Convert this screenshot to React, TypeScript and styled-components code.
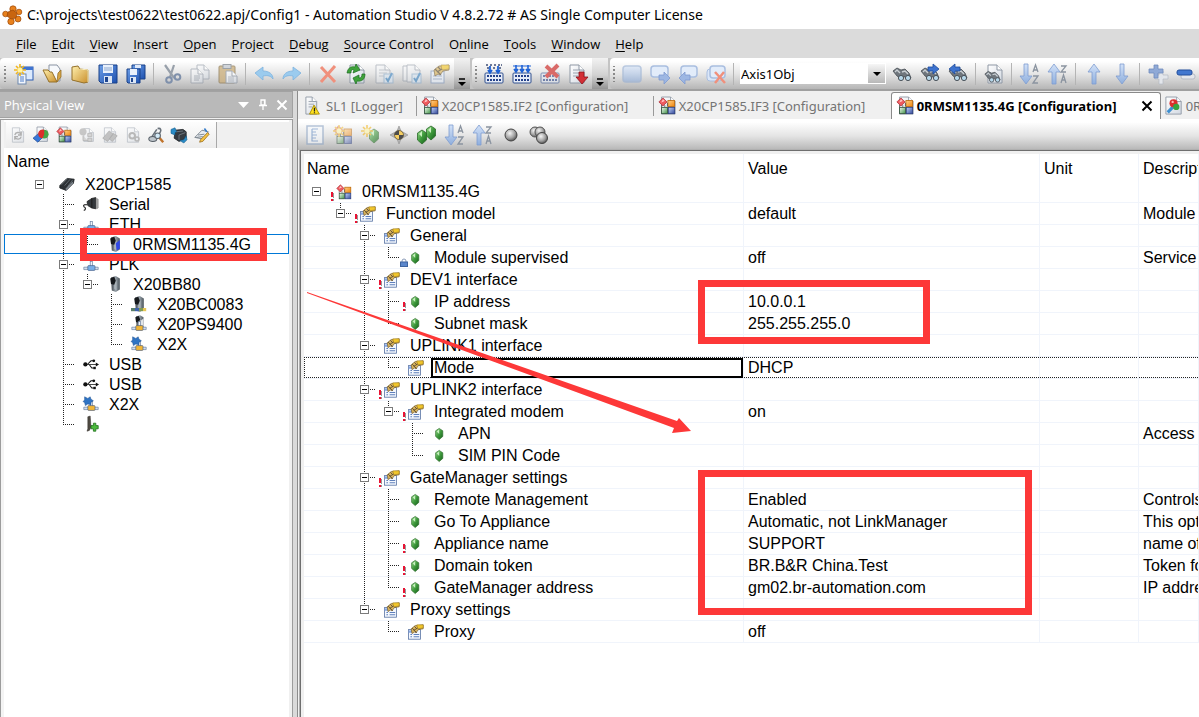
import React from 'react';
import styled, { createGlobalStyle, css } from 'styled-components';

const ui = '"Open Sans", "Noto Sans", sans-serif';
const wide = '"Noto Sans", "Open Sans", sans-serif';
const grid = '"Liberation Sans", Arial, sans-serif';
const red = '#fd3838';

const GlobalStyle = createGlobalStyle`
  * { box-sizing: border-box; }
  body { margin: 0; background: #f0f0f0; color: #000; font-family: ${ui}; }
  button { margin: 0; padding: 0; border: 0; background: none; font: inherit; color: inherit; }
  ul { margin: 0; padding: 0; list-style: none; }
`;

/* ---------- icons ---------- */

const Defs = () => (
  <svg width="0" height="0" style={{ display: 'block' }} aria-hidden="true">
    <defs>
      <linearGradient id="gold" x1="0" y1="0" x2="1" y2="1"><stop offset="0" stopColor="#fff0ae" /><stop offset="1" stopColor="#c98f2c" /></linearGradient>
      <linearGradient id="blue" x1="0" y1="0" x2="1" y2="1"><stop offset="0" stopColor="#6ea0e8" /><stop offset="1" stopColor="#1c4fae" /></linearGradient>
      <linearGradient id="pale" x1="0" y1="0" x2="0" y2="1"><stop offset="0" stopColor="#d3e2f8" /><stop offset="1" stopColor="#8eaedd" /></linearGradient>
      <linearGradient id="steel" x1="0" y1="0" x2="1" y2="0"><stop offset="0" stopColor="#3a4046" /><stop offset="0.5" stopColor="#98a2aa" /><stop offset="1" stopColor="#4d565d" /></linearGradient>
      <linearGradient id="gem" x1="0" y1="0" x2="1" y2="1"><stop offset="0" stopColor="#9ade8e" /><stop offset="0.5" stopColor="#3f9a3c" /><stop offset="1" stopColor="#155f1b" /></linearGradient>
      <linearGradient id="page" x1="0" y1="0" x2="1" y2="1"><stop offset="0" stopColor="#ffffff" /><stop offset="1" stopColor="#d3d9e2" /></linearGradient>
      <linearGradient id="orangeTile" x1="0" y1="0" x2="1" y2="1"><stop offset="0" stopColor="#ffd08a" /><stop offset="1" stopColor="#f08408" /></linearGradient>
      <linearGradient id="greenTile" x1="0" y1="0" x2="1" y2="1"><stop offset="0" stopColor="#f2fbf0" /><stop offset="1" stopColor="#3f9247" /></linearGradient>
      <linearGradient id="blueTile" x1="0" y1="0" x2="1" y2="1"><stop offset="0" stopColor="#c5d6f8" /><stop offset="1" stopColor="#33499c" /></linearGradient>
      <radialGradient id="ball" cx="0.4" cy="0.35" r="0.7"><stop offset="0" stopColor="#f5f5f5" /><stop offset="0.6" stopColor="#a0a0a0" /><stop offset="1" stopColor="#4a4a4a" /></radialGradient>
    </defs>
  </svg>
);

const Page = ({ x = 3, y = 1, w = 14, h = 18 }: { x?: number; y?: number; w?: number; h?: number }) => (
  <>
    <path d={`M${x} ${y}h${w - 5}l5 5v${h - 5}h-${w}z`} fill="url(#page)" stroke="#8f98a5" />
    <path d={`M${x + w - 5} ${y}v5h5`} fill="#fff" stroke="#8f98a5" />
  </>
);
const Tiles = () => (
  <>
    <rect x="11" y="4" width="7.500" height="6.500" fill="url(#orangeTile)" stroke="#b86404" strokeWidth="0.9" />
    <rect x="4" y="11.500" width="6.500" height="7" fill="url(#greenTile)" stroke="#2b4a35" strokeWidth="0.9" />
    <rect x="11.500" y="11.500" width="7" height="7" fill="url(#blueTile)" stroke="#2c3f80" strokeWidth="0.9" />
    <path d="M4 9v2M7.500 9v2M10.500 6.500v4" stroke="#444" strokeWidth="0.8" />
    <path d="M5.500 1l4.500 4.500-4.500 4.500L1 5.500z" fill="#ee5a5e" stroke="#a82a33" strokeWidth="0.8" />
    <path d="M5.500 2.500l2 2-4 1.500z" fill="#ffc7c7" />
  </>
);
const Star = () => (
  <>
    <path d="M6 0v12M0 6h12M2 2l8 8M10 2l-8 8" stroke="#f2b61c" strokeWidth="1.600" />
    <circle cx="6" cy="6" r="2.500" fill="#fff6a6" />
  </>
);
const Binos = () => (
  <>
    <path d="M1 7l4-3 4 2 4-1 4 4 2 5-4 2-3-4-2 3-5-3z" fill="#6f767d" stroke="#484e54" strokeWidth="0.8" />
    <path d="M3 8l2-2 3 3M10 8l3-1 3 3" stroke="#c9cfd4" fill="none" strokeWidth="1.400" />
    <circle cx="9" cy="14" r="2.600" fill="#b6d7ea" stroke="#4b5259" />
    <circle cx="16" cy="14" r="2.600" fill="#b6d7ea" stroke="#4b5259" />
  </>
);
const Bits = () => (
  <>
    <rect x="1" y="9" width="18" height="10" rx="1" fill="#e6ecf7" stroke="#31508f" />
    <path d="M3 12h14M3 16h14" stroke="#24418a" strokeWidth="2" strokeDasharray="2 1" />
  </>
);
const ArrowD = ({ x = 8 }: { x?: number }) => <path d={`M${x - 2} 0h4v12h4l-6 8-6-8h4z`} fill="url(#pale)" stroke="#7f9dd0" strokeWidth="0.8" />;
const ArrowU = ({ x = 8 }: { x?: number }) => <path d={`M${x - 2} 20h4V8h4l-6-8-6 8h4z`} fill="url(#pale)" stroke="#7f9dd0" strokeWidth="0.8" />;
const Letters = ({ flip }: { flip?: boolean }) => (
  <g stroke="#8b94a0" strokeWidth="1.300" fill="none">
    {flip ? <path d="M13 2h5l-5 6h5M13 19l2.500-8 2.500 8M14 16h3" /> : <path d="M13 8l2.500-7 2.500 7M14 6h3M13 12h5l-5 7h5" />}
  </g>
);
const Hand = () => (
  <>
    <path d="M4 6l5-4 3 0 7-1v5l-6 1-3 4-2-1-3 2z" fill="#d9b45c" stroke="#6d5323" strokeWidth="0.8" />
    <path d="M11 1h8v4l-7 1z" fill="#f1c62c" stroke="#8f6d14" strokeWidth="0.6" />
    <path d="M7 8l5-3M5 5l6 6M8 3l3 3" stroke="#5b4b32" strokeWidth="1.100" />
  </>
);
const Net = ({ fill }: { fill: string }) => (
  <>
    <path d="M1 14h18v3H1z" fill="#d4e0ef" stroke="#61789b" strokeWidth="0.8" />
    <rect x="9" y="7" width="3" height="6" fill="#eef3fa" stroke="#61789b" strokeWidth="0.8" />
    <rect x="6" y="12" width="9" height="6" rx="1" fill={fill} stroke="#42597f" strokeWidth="0.8" />
  </>
);
const Module = ({ accent }: { accent?: string }) => (
  <>
    <path d="M5 2l6-2 5 3v14l-5 3-5-2z" fill="url(#steel)" />
    <path d="M9 4l3 2v12l-3-2z" fill="#a9b2b8" />
    <path d="M4 3l5-2 2 5-2 5-4-1z" fill="#16191c" />
    {accent && <path d="M11 9l5-4v11l-4 2z" fill={accent} />}
  </>
);
const Clover = () => <path d="M2 1l4 2 3-2 1 3 3 2-3 2v3l-4-1-3 2-1-4-2-1 2-2z" fill="#2f74c4" stroke="#1b4c8c" strokeWidth="0.6" />;
const Gem = ({ x = 0, y = 0 }: { x?: number; y?: number }) => (
  <g transform={`translate(${x} ${y})`}>
    <path d="M9 3l4.500 3v7L9 17l-4.500-4V6z" fill="url(#gem)" stroke="#2d6b2c" strokeWidth="0.8" />
    <path d="M6 7l3-3v6z" fill="#c9f0c0" />
  </g>
);

const art: Record<string, React.ReactNode> = {
  app: (
    <g fill="#e8811c" stroke="#9c4708" strokeWidth="0.7">
      <circle cx="11" cy="4" r="3.200" /><circle cx="17" cy="7" r="2.800" /><circle cx="16" cy="14" r="3" /><circle cx="9" cy="16.500" r="3.200" /><circle cx="3.500" cy="9" r="2.800" />
      <path d="M6 7l5-2 4 3-1 5-5 1-4-3z" fill="#c9650f" />
    </g>
  ),
  newProject: (<><rect x="6" y="3" width="13" height="13" fill="#dceafd" stroke="#2a5bb0" /><path d="M6 3h13v3H6z" fill="#3f74d1" /><rect x="4" y="10" width="8" height="10" fill="#f2f6fc" stroke="#6c87ad" /><path d="M6 13h4M6 15h4M6 17h4" stroke="#4d7cc9" /><Star /></>),
  open: (<><path d="M7 1h8l3 4v12H7z" fill="#f7f9fc" stroke="#8a94a3" /><path d="M1 6h5l2 2h2l5 10H7z" fill="url(#gold)" stroke="#94702a" /><path d="M15 18l4-5V6l-3 3z" fill="#d7a646" stroke="#94702a" strokeWidth="0.8" /></>),
  folder: (<><path d="M2 3l6-1 2 3 8 1v12l-4 1L2 16z" fill="url(#gold)" stroke="#94702a" /><path d="M10 5l8 1v12" fill="none" stroke="#fff2bf" /></>),
  save: (<><path d="M1 1h18v18H3l-2-2z" fill="url(#blue)" stroke="#194088" /><rect x="5" y="1" width="10" height="8" fill="#e8f0fb" /><path d="M6 4h8M6 6h8" stroke="#8fa9cf" /><rect x="6" y="12" width="8" height="7" fill="#dce6f4" /><rect x="7" y="13" width="3" height="5" fill="#1e458f" /></>),
  saveAll: (<><path d="M6 1h13v14H6z" fill="url(#blue)" stroke="#194088" /><rect x="9" y="1" width="6" height="3" fill="#dfeafa" /><path d="M1 5h13v14H2l-1-1z" fill="url(#blue)" stroke="#194088" /><rect x="4" y="5" width="7" height="6" fill="#e8f0fb" /><rect x="4" y="13" width="6" height="6" fill="#dce6f4" /><rect x="5" y="14" width="2" height="4" fill="#1e458f" /></>),
  cut: (<g fill="none"><path d="M3 1l9 13M12 1L8 13" stroke="#98a0aa" strokeWidth="2.200" /><circle cx="7" cy="16" r="2.800" stroke="#7f90ab" strokeWidth="2" /><circle cx="15.500" cy="13" r="2.800" stroke="#7f90ab" strokeWidth="2" /></g>),
  copy: (<g opacity="0.6"><Page x={7} y={1} w={12} h={14} /><Page x={1} y={5} w={12} h={14} /><path d="M4 12h6M4 14h6M4 16h5" stroke="#8f98a5" /></g>),
  paste: (<g opacity="0.75"><rect x="1" y="2" width="16" height="17" rx="1" fill="#cbae7a" stroke="#8e7a55" /><rect x="5" y="0.500" width="8" height="4" fill="#c5cbd2" stroke="#808890" /><Page x={8} y={7} w={11} h={12} /><path d="M10 13h6M10 15h6M10 17h6" stroke="#a5adb8" /></g>),
  undo: <path d="M1 9l8-6v4c6 0 10 3 10 8-2-3-5-4-10-3v4z" fill="#9bcbee" stroke="#7db2de" strokeWidth="0.8" />,
  redo: <path d="M19 9l-8-6v4C5 7 1 10 1 15c2-3 5-4 10-3v4z" fill="#9bcbee" stroke="#7db2de" strokeWidth="0.8" />,
  del: <path d="M3 3l14 15M17 2L3 18" stroke="#f0907c" strokeWidth="3" fill="none" />,
  rebuild: (<><Page x={4} y={1} w={14} h={18} /><path d="M1 9C2 3 6 2 9 3l1-3 4 6-7 3 1-3C6 5 5 6 5 9z" fill="#3fa23b" stroke="#1b6b20" strokeWidth="0.7" /><path d="M19 10c0 5-3 8-8 7l-1 3-3-6 6-3v3c2 0 3-1 3-4z" fill="#3fa23b" stroke="#1b6b20" strokeWidth="0.7" /></>),
  check: (<g opacity="0.55"><Page x={2} y={1} /><path d="M5 6h6M5 9h8M5 12h5" stroke="#a5adb8" /><rect x="10" y="10" width="9" height="9" fill="#d9e8f7" stroke="#84a9cc" /><path d="M12 14l2 3 4-8" stroke="#2b7cc0" strokeWidth="2" fill="none" /></g>),
  checks: (<g opacity="0.55"><Page x={1} y={2} w={12} h={15} /><Page x={5} y={1} w={13} h={17} /><rect x="10" y="10" width="9" height="9" fill="#d9e8f7" stroke="#84a9cc" /><path d="M12 14l2 3 4-8" stroke="#2b7cc0" strokeWidth="2" fill="none" /></g>),
  props: (<g opacity="0.65"><rect x="1" y="7" width="13" height="12" fill="#eaf1fb" stroke="#8198bb" /><path d="M3 12h9M3 15h9" stroke="#94a6c4" /><Hand /></g>),
  build: (<><Bits /><path d="M2 1h2m2 0h2m2 0h2m2 0h2m1 0h1M3 4h2m4 0h2m4 0h2" stroke="#3f4f78" strokeWidth="1.400" /><path d="M6 2v6m-2-2l2 3 2-3M14 2v6m-2-2l2 3 2-3" stroke="#1e62d6" strokeWidth="1.800" fill="none" /></>),
  buildAll: (<><Bits /><path d="M4 1v6m-2-2l2 3 2-3M10 1v6M8 5l2 3 2-3M16 1v6m-2-2l2 3 2-3" stroke="#1e62d6" strokeWidth="1.600" fill="none" /><path d="M1 2h18" stroke="#1e62d6" /></>),
  buildStop: (<><g opacity="0.55"><Bits /></g><path d="M6 2l12 11M18 1L6 13" stroke="#d96a68" strokeWidth="4" /></>),
  transfer: (<><Page x={2} y={1} /><path d="M5 6h7M5 9h8M5 12h5" stroke="#9aa3af" /><path d="M11 8h5v5h4l-6 7-6-7h3z" fill="#d32f36" stroke="#8c1219" strokeWidth="0.8" /></>),
  bookmark: <rect x="1" y="2" width="18" height="16" rx="3" fill="url(#pale)" stroke="#93add4" strokeWidth="1.500" opacity="0.6" />,
  bookNext: (<><rect x="1" y="2" width="17" height="11" rx="3" fill="#e2ecfa" stroke="#a9bee0" strokeWidth="1.500" /><path d="M9 11h5V8l6 6-6 6v-4H9z" fill="#9db7e3" stroke="#7f9bd0" strokeWidth="0.8" /></>),
  bookPrev: (<><rect x="3" y="2" width="16" height="11" rx="3" fill="#e2ecfa" stroke="#a9bee0" strokeWidth="1.500" /><path d="M12 11H7V8l-6 6 6 6v-4h5z" fill="#9db7e3" stroke="#7f9bd0" strokeWidth="0.8" /></>),
  bookClear: (<><rect x="1" y="5" width="15" height="12" rx="3" fill="#dbe7f8" stroke="#a9bee0" /><rect x="4" y="2" width="15" height="12" rx="3" fill="#e2ecfa" stroke="#a9bee0" strokeWidth="1.500" /><path d="M9 8l10 11M18 8L9 19" stroke="#f0907c" strokeWidth="2.500" /></>),
  find: <Binos />,
  findNext: (<><Binos /><path d="M8 3h5V0l6 5-6 5V7H8z" fill="#3d73cf" stroke="#1d4a9a" strokeWidth="0.8" /></>),
  findPrev: (<><Binos /><path d="M12 3H7V0L1 5l6 5V7h5z" fill="#3d73cf" stroke="#1d4a9a" strokeWidth="0.8" /></>),
  findPage: (<><Page x={4} y={1} w={14} h={18} /><g transform="translate(0 4) scale(.85)"><Binos /></g></>),
  sortAz: (<><ArrowD x={6} /><Letters /></>),
  sortZa: (<><ArrowU x={6} /><Letters flip /></>),
  up: <ArrowU x={10} />,
  down: <ArrowD x={10} />,
  plus: (<><path d="M9 6h4v4h5v4h-5v5H9v-5H5v-4h4z" transform="translate(2 1)" fill="#e3e6eb" stroke="#b4bac4" strokeWidth="0.7" /><path d="M6 1h4v4h5v4h-5v5H6V9H1V5h5z" fill="#8fa9d6" stroke="#6f8abd" strokeWidth="0.8" /></>),
  minus: (<><rect x="5" y="10" width="14" height="5" rx="2" fill="#e3e6eb" stroke="#b4bac4" /><rect x="1" y="6" width="15" height="5" rx="2" fill="#4177cf" stroke="#234f9c" /></>),

  grayRefresh: (<g opacity="0.55"><Page /><path d="M6 10c1-4 6-4 8-1M14 6v4h-4M14 12c-1 4-6 4-8 1M6 16v-4h4" stroke="#777" strokeWidth="1.600" fill="none" /></g>),
  objects: (<><Page x={5} y={0} w={13} h={18} /><path d="M0 14l7-6 5 5-6 6z" fill="#3878d8" stroke="#1b468f" strokeWidth="0.8" /><circle cx="14" cy="9" r="5.500" fill="#46a546" /><path d="M14 9V3.500a5.500 5.500 0 10-2 10.600z" fill="#dc2f2c" /></>),
  tiles: (<><Page x={4} y={0} w={15} h={19} /><Tiles /></>),
  grayA: (<g opacity="0.55"><Page x={6} y={2} w={12} h={16} /><circle cx="5" cy="6" r="4.500" fill="#a0a0a0" /><path d="M5 11v6h6M11 8h5v4h-5zM11 14h5v4h-5z" stroke="#808080" fill="#bbb" /></g>),
  grayB: (<g opacity="0.55"><Page /><path d="M9 5l5 4-7 9-6-4zM14 8l5 3-6 7-4-3z" fill="#999" stroke="#777" /></g>),
  grayC: (<g opacity="0.55"><Page /><circle cx="9" cy="11" r="3.500" fill="none" stroke="#888" strokeWidth="2.500" /><circle cx="15" cy="15" r="2.500" fill="none" stroke="#888" strokeWidth="2" /></g>),
  inspect: (<><path d="M12 2c4-1 5 2 3 5l-4 6M11 3L5 12" stroke="#69727b" strokeWidth="2" fill="none" /><ellipse cx="6" cy="15" rx="5" ry="3" fill="#bfc6cc" stroke="#555d65" strokeWidth="1.300" /><path d="M14 13l5 6" stroke="#c0732b" strokeWidth="3" /><circle cx="12" cy="11" r="3.500" fill="#d4ebf8" stroke="#58616a" strokeWidth="1.300" /></>),
  swap: (<><path d="M5 4l10-1 4 3v8l-9 4-6-4z" fill="#353b42" stroke="#1e2226" /><path d="M6 6l9-1M10 16v-6l8-3" stroke="#79828a" fill="none" /><path d="M0 3l5-2 2 5-2 1v3L0 8zM19 11l1 5-4 4-5-3 5-1z" fill="#2a8cc7" stroke="#145a88" strokeWidth="0.7" /></>),
  pencil: (<><path d="M1 13l9-9 8 2-7 9z" fill="#e9edf2" stroke="#68737e" /><path d="M3 13l8-1M5 10l8-1" stroke="#68737e" /><path d="M8 16l9-9 2 2-8 9-4 1z" fill="#f5c445" stroke="#8f651b" strokeWidth="0.9" /><path d="M13 2l3 4" stroke="#3279c7" strokeWidth="2" /></>),

  treeIcon: (<g opacity="0.6"><rect x="2" y="1" width="16" height="18" fill="#f6f9fd" stroke="#8ba3c4" strokeWidth="1.500" /><path d="M7 4v12h6M7 7h4M7 10h5M7 13h4M7 4h6" stroke="#6c93c9" strokeWidth="1.200" fill="none" /></g>),
  tilesNew: (<g opacity="0.5"><Tiles /><Star /></g>),
  gemNew: (<g opacity="0.6"><Gem x={4} y={1} /><Star /></g>),
  target: (<><path d="M10 1l2 5 7 4-7 4-2 5-2-5-7-4 7-4z" fill="#b5b5b5" stroke="#8e8e8e" strokeWidth="0.6" /><circle cx="10" cy="10" r="4.500" fill="#f6cf62" stroke="#6a5a35" strokeWidth="0.8" /><path d="M10 5.500V10H5.500A4.500 4.500 0 0110 5.500zM10 14.500V10h4.500a4.500 4.500 0 01-4.500 4.500z" fill="#4c4c4c" /></>),
  gems: (<><Gem x={5} y={-2} /><Gem x={-4} y={2} /></>),
  ball: <circle cx="10" cy="10" r="6" fill="url(#ball)" stroke="#444" />,
  balls: (<><circle cx="6" cy="7" r="5" fill="url(#ball)" stroke="#555" /><circle cx="11" cy="7" r="5" fill="url(#ball)" stroke="#555" /><circle cx="13" cy="13" r="5.500" fill="url(#ball)" stroke="#444" /></>),

  logger: (<><Page x={1} y={0} w={12} h={19} /><path d="M4 5h4M4 8h6M4 11h4" stroke="#9aa3af" /><path d="M10 9l6 10H5z" fill="#ffe11f" stroke="#a68a00" /><path d="M10.500 12v4M10.500 17v1" stroke="#222" strokeWidth="1.400" /></>),
  watch: (<><Page x={1} y={0} w={17} h={19} /><path d="M9 11l-6 6" stroke="#3d8fd0" strokeWidth="3.500" /><circle cx="9.500" cy="7" r="4.500" fill="#dc2f2c" /><circle cx="12.500" cy="11" r="3.500" fill="#39a33e" /><circle cx="8.500" cy="5.500" r="1.300" fill="#ffb3b0" /></>),

  plc: (<><path d="M1 12l9-9 9 1-1 5-9 9-8-3z" fill="#2c3034" stroke="#1c1f22" /><path d="M3 11l8-8M7 12l7-8M11 13l6-8" stroke="#6a7279" /><path d="M9 18l9-9-1-2-9 9z" fill="#7d858c" /></>),
  serial: (<><path d="M11 3l5-1v14l-5-1zM5 7l6-4v12l-5-3z" fill="#34383c" stroke="#222" /><path d="M17 3l2 1v11l-2 1z" fill="#a8a8a8" stroke="#777" strokeWidth="0.6" /><path d="M5 11H2c-2 0-1 3 0 3s2 4-1 4" stroke="#111" strokeWidth="1.400" fill="none" /></>),
  eth: <Net fill="#78aee8" />,
  modem: <Module accent="#2f48e6" />,
  module: <Module />,
  bc: (<><Module /><path d="M0 15h5v4H0z" fill="#5b7f6b" /><path d="M5 15h5v4H5z" fill="#3f62ac" /><path d="M10 15h5v4h-5z" fill="#7f9a55" /><path d="M15 15h4v4h-4z" fill="#e6c557" /></>),
  ps: (<><g transform="translate(2 -1) scale(.85)"><Module accent="#e3e6e8" /></g><Net fill="#f3b636" /></>),
  x2x: (<><Net fill="#f3b636" /><Clover /></>),
  usb: (<g fill="#111"><circle cx="3" cy="10.500" r="2.700" /><path d="M3 10h13V8l4 2.500-4 2.500v-2H3z" /><path d="M6 10l4-4h3M8 11l3 4h3" stroke="#111" strokeWidth="1.300" fill="none" /><circle cx="13.500" cy="6" r="1.700" /><rect x="13" y="13.500" width="3" height="3" /></g>),
  slot: (<><path d="M6 1l3-1 1 14-2 4-3 1 1-3z" fill="#4f4a42" stroke="#2e2b26" strokeWidth="0.6" /><path d="M13 9h3v3h3v4h-3v3h-3v-3h-3v-4h3z" fill="#4cbb3c" stroke="#1e701a" /></>),
  card: (<><rect x="0.500" y="7" width="15" height="12" fill="#f3f7fd" stroke="#5872a3" /><path d="M1 8h5v3H1z" fill="#87a8e4" /><path d="M3 13h2M7 13h7M3 16h2M7 16h7" stroke="#5f80bb" strokeWidth="1.300" /><Hand /></>),
  gem: <Gem />,
  config: <Tiles />,
};

const Svg = styled.svg`
  display: block;
  flex: none;
  overflow: visible;
`;
const Icon = ({ name, size = 20 }: { name: string; size?: number }) => (
  <Svg width={size} height={size} viewBox="0 0 20 20" aria-hidden="true">{art[name]}</Svg>
);

/* ---------- window frame ---------- */

const Window = styled.div`
  display: flex;
  flex-direction: column;
  height: 100vh;
  overflow: hidden;
`;
const TitleBar = styled.header`
  display: flex;
  align-items: center;
  gap: 5px;
  height: 29px;
  padding-left: 2px;
  background: #fff;
  font: 14px ${wide};
  white-space: nowrap;
`;
const MenuBar = styled.nav`
  display: flex;
  align-items: center;
  gap: 15px;
  height: 29px;
  padding-left: 16px;
  background: #dbdbdb;
  font-size: 13px;
  button { white-space: nowrap; }
  u { text-underline-offset: 2px; }
`;
const ToolRow = styled.div`
  display: flex;
  gap: 2px;
  height: 33px;
  overflow: hidden;
  background: #c4c4c4;
  border-bottom: 2px solid #a0a0a0;
`;
const ToolGroup = styled.div<{ $grow?: boolean }>`
  display: flex;
  align-items: center;
  flex: ${p => (p.$grow ? '1 0 auto' : 'none')};
  border-radius: 4px 0 0 4px;
  background: linear-gradient(#fff 10%, #e6e6e6 50%, #b6b6b6);
`;
const Grip = styled.span<{ $w: number }>`
  width: ${p => p.$w}px;
  height: 16px;
  background: radial-gradient(circle, #8a8a8a 1px, transparent 1px) center / 4px 4px repeat-y;
`;
const ToolButton = styled.button<{ $w?: number }>`
  display: flex;
  align-items: center;
  justify-content: center;
  flex: none;
  width: ${p => p.$w ?? 28}px;
  height: 28px;
`;
const Divider = styled.span`
  flex: none;
  width: 1px;
  height: 22px;
  margin: 0 4px 0 3px;
  background: #b4b4b4;
`;
const Overflow = styled.button`
  align-self: stretch;
  display: flex;
  align-items: flex-end;
  justify-content: center;
  width: 16px;
  padding-bottom: 3px;
  background: linear-gradient(#f2f2f2, #d2d2d2 55%, #949494);
`;
const Combo = styled.label`
  display: grid;
  grid-template-columns: 1fr 17px;
  width: 146px;
  height: 21px;
  margin: 0 2px;
  padding: 1px;
  background: #fff;
`;
const ComboSelect = styled.select`
  grid-area: 1 / 1 / 2 / 3;
  appearance: none;
  border: 0;
  padding: 0;
  background: #fff;
  font: 13px ${wide};
`;
const ComboArrow = styled.span`
  grid-area: 1 / 2;
  display: flex;
  align-items: center;
  justify-content: center;
  background: linear-gradient(#f6f6f6, #b8b8b8);
  pointer-events: none;
`;

const Main = styled.main`
  display: flex;
  flex: 1;
  min-height: 0;
`;

/* ---------- physical view ---------- */

const Side = styled.section`
  display: flex;
  flex-direction: column;
  flex: none;
  width: 293px;
`;
const SideHeader = styled.div`
  display: flex;
  align-items: center;
  height: 27px;
  padding: 0 1px 0 4px;
  border: 1px solid #a2a2a2;
  border-left: 0;
  background: #b9b9b9;
  color: #fff;
  h2 { flex: 1; margin: 0; font-size: 13px; font-weight: 400; }
`;
const HeaderButton = styled.button`
  display: flex;
  align-items: center;
  justify-content: center;
  width: 19px;
  height: 20px;
`;
const SideBody = styled.div`
  flex: 1;
  margin-top: 1px;
  padding: 2px 3px 0 3px;
  border: 1px solid #9c9c9c;
  border-bottom: 0;
  background: linear-gradient(to right, #f4f4f4 0 3px, #fff 3px calc(100% - 3px), #f0f0f0 calc(100% - 3px));
`;
const SideTools = styled.div`
  display: flex;
  height: 26px;
  background: #f0f0f0;
`;
const SideStrip = styled.div`
  display: flex;
  align-items: center;
  margin-left: 2px;
  padding-right: 3px;
  border-right: 1px solid #a8a8a8;
  background: linear-gradient(#fdfdfd, #ececec);
`;
const SideTitle = styled.div`
  height: 26px;
  padding-left: 3px;
  font: 16px/28px ${grid};
`;
const TreeRow = styled.li<{ $selected?: boolean }>`
  position: relative;
  display: flex;
  align-items: center;
  height: 20px;
  padding-left: 23px;
  box-shadow: ${p => (p.$selected ? 'inset 0 0 0 1px #0078d7' : 'none')};
  font: 16px/20px ${grid};
`;
const Splitter = styled.div`
  flex: none;
  width: 5px;
  border-right: 1px solid #8c8c8c;
  background: #dadada;
`;

/* ---------- tree pieces, shared by both trees ---------- */

type Link = '' | 'v' | 't' | 'l';
const dotsDown = 'repeating-linear-gradient(to bottom, #222 0 1px, transparent 1px 2px)';
const dotsAcross = 'repeating-linear-gradient(to right, #222 0 1px, transparent 1px 2px)';

const Guide = styled.span<{ $link: Link; $h: number }>`
  display: flex;
  align-items: center;
  justify-content: center;
  flex: none;
  width: 24px;
  height: ${p => p.$h}px;
  ${p => p.$link && css`
    background:
      ${dotsDown} 12px 0 / 1px ${p.$link === 'l' ? '50%' : '100%'} no-repeat
      ${p.$link !== 'v' && css`, ${dotsAcross} 12px 50% / 12px 1px no-repeat`};
  `}
`;
const Expander = styled.button`
  width: 9px;
  height: 9px;
  border: 1px solid #7b7b7b;
  background: linear-gradient(#000, #000) center / 5px 1px no-repeat #fff;
`;
const Marker = styled.span`
  display: flex;
  align-items: flex-end;
  justify-content: center;
  flex: none;
  width: 8px;
  height: 18px;
`;
const TreeLabel = styled.span<{ $low?: boolean }>`
  padding: ${p => (p.$low ? 2 : 0)}px 0 0 10px;
  white-space: pre;
`;

type Mark = 'alert' | 'lock' | undefined;
const MarkArt = ({ kind }: { kind: Mark }) =>
  kind === 'alert' ? (
    <Svg width="4" height="9" viewBox="0 0 4 9" aria-hidden="true"><path d="M1 0h2v5H1zM1 7h2v2H1z" fill="#ea1233" /><path d="M3 1h1v5H3zM3 7h1v2H3z" fill="#999" /></Svg>
  ) : kind === 'lock' ? (
    <Svg width="8" height="9" viewBox="0 0 8 9" aria-hidden="true"><path d="M2 5V3a2 2 0 014 0v2" stroke="#8a9bb8" fill="none" /><rect x="0.500" y="4" width="7" height="4.500" fill="#5b87cc" stroke="#3d639f" /></Svg>
  ) : null;

const Node = ({ links, open, icon, mark, h }: { links: Link[]; open?: boolean; icon: string; mark?: Mark; h: number }) => (
  <>
    {links.map((l, i) => (
      <Guide key={i} $link={l} $h={h}>{open && i === links.length - 1 && <Expander type="button" aria-label="Collapse" />}</Guide>
    ))}
    <Marker><MarkArt kind={mark} /></Marker>
    <Icon name={icon} size={16} />
  </>
);

/* ---------- editor ---------- */

const Editor = styled.section`
  display: flex;
  flex-direction: column;
  flex: 1;
  min-width: 0;
`;
const Tabs = styled.div`
  display: flex;
  height: 28px;
  padding: 1px 0 0 3px;
  overflow: hidden;
  background: #f0f0f0;
`;
const Tab = styled.button<{ $active?: boolean; $rule?: boolean; $min?: number }>`
  display: flex;
  align-items: center;
  flex: none;
  gap: 3px;
  min-width: ${p => p.$min ?? 0}px;
  padding: 0 14px 0 4px;
  color: #747474;
  font: 13px ${wide};
  white-space: nowrap;
  ${p => p.$rule && css`background: linear-gradient(#999, #999) right 4px / 1px 20px no-repeat;`}
  ${p => p.$active && css`
    border: 1px solid #8a8a8a;
    border-bottom: 0;
    border-radius: 3px 3px 0 0;
    background: #fff;
    color: #000;
    font-weight: 700;
  `}
`;
const TabClose = styled.span`
  display: flex;
  margin-right: -6px;
  margin-left: auto;
`;
const EditorTools = styled.div`
  display: flex;
  align-items: center;
  height: 31px;
  padding-left: 3px;
  background: linear-gradient(#fff 10%, #e4e4e4 55%, #b6b6b6);
`;
const Frame = styled.div`
  position: relative;
  flex: 1;
  margin-left: 2px;
  padding: 3px 0 0 3px;
  border: 1px solid #6e6e6e;
  border-width: 1px 0 0 1px;
  box-shadow: -1px 0 0 #b0b0b0, 0 -1px 0 #b0b0b0;
  background: #f0f0f0;
`;
const Sheet = styled.div`
  height: 100%;
  overflow: hidden;
  background: #fff;
`;
const Table = styled.table`
  width: 100%;
  table-layout: fixed;
  border-collapse: separate;
  border-spacing: 0;
  font: 16px/20px ${grid};
  th, td {
    overflow: hidden;
    padding: 0 0 0 4px;
    border-right: 1px solid #f0f4fb;
    font-weight: 400;
    text-align: left;
    white-space: nowrap;
  }
  th { height: 27px; padding-top: 2px; }
  th:first-child { padding-left: 3px; }
  td { height: 22px; border-bottom: 1px solid #f0f4fb; }
  td:first-child { padding: 0; }
`;
const Row = styled.tr<{ $selected?: boolean }>`
  ${p => p.$selected && css`
    td {
      background: ${dotsAcross} 0 0 / 100% 1px no-repeat, ${dotsAcross} 0 100% / 100% 1px no-repeat;
    }
    td:first-child {
      background: ${dotsAcross} 0 0 / 100% 1px no-repeat, ${dotsAcross} 0 100% / 100% 1px no-repeat, ${dotsDown} 0 0 / 1px 100% no-repeat;
    }
  `}
`;
const NameCell = styled.div`
  display: flex;
  align-items: center;
  height: 21px;
`;
const EditBox = styled.div`
  flex: 1;
  height: 20px;
  margin-left: 7px;
  padding-left: 1px;
  border: 2px solid #000;
  line-height: 16px;
`;

/* ---------- callouts ---------- */

const Callout = styled.div<{ $x: number; $y: number; $w: number; $h: number }>`
  position: absolute;
  z-index: 2;
  left: ${p => p.$x}px;
  top: ${p => p.$y}px;
  width: ${p => p.$w}px;
  height: ${p => p.$h}px;
  border: 7px solid ${red};
  pointer-events: none;
`;
const Pointer = styled.svg`
  position: absolute;
  z-index: 2;
  left: 0;
  top: 138px;
  pointer-events: none;
`;

/* ---------- data ---------- */

const menus: [string, string, string][] = [
  ['', 'F', 'ile'], ['', 'E', 'dit'], ['', 'V', 'iew'], ['', 'I', 'nsert'], ['', 'O', 'pen'], ['', 'P', 'roject'], ['', 'D', 'ebug'],
  ['', 'S', 'ource Control'], ['O', 'n', 'line'], ['', 'T', 'ools'], ['', 'W', 'indow'], ['', 'H', 'elp'],
];
const fileTools = ['newProject', 'open', 'folder', 'save', 'saveAll', '|', 'cut', 'copy', 'paste', '|', 'undo', 'redo', '|', 'del', 'rebuild', 'check', 'checks', 'props'];
const buildTools = ['build', 'buildAll', 'buildStop', 'transfer'];
const markTools = ['bookmark', 'bookNext', 'bookPrev', 'bookClear', '|'];
const findTools = ['find', 'findNext', 'findPrev', '|', 'findPage', '|', 'sortAz', 'sortZa', '|', 'up', 'down', '|', 'plus', 'minus'];
const sideTools = ['grayRefresh', 'objects', 'tiles', 'grayA', 'grayB', 'grayC', 'inspect', 'swap', 'pencil'];
const editorTools = ['treeIcon', 'tilesNew', 'gemNew', 'target', 'gems', 'sortAz', 'sortZa', 'ball', 'balls'];

type Item = { links: Link[]; open?: boolean; icon: string; label: string; selected?: boolean };
const hardware: Item[] = [
  { links: [''], open: true, icon: 'plc', label: 'X20CP1585' },
  { links: ['', 't'], icon: 'serial', label: 'Serial' },
  { links: ['', 't'], open: true, icon: 'eth', label: 'ETH' },
  { links: ['', 'v', 'l'], icon: 'modem', label: '0RMSM1135.4G', selected: true },
  { links: ['', 't'], open: true, icon: 'eth', label: 'PLK' },
  { links: ['', 'v', 'l'], open: true, icon: 'module', label: 'X20BB80' },
  { links: ['', 'v', '', 't'], icon: 'bc', label: 'X20BC0083' },
  { links: ['', 'v', '', 't'], icon: 'ps', label: 'X20PS9400' },
  { links: ['', 'v', '', 'l'], icon: 'x2x', label: 'X2X' },
  { links: ['', 't'], icon: 'usb', label: 'USB' },
  { links: ['', 't'], icon: 'usb', label: 'USB' },
  { links: ['', 't'], icon: 'x2x', label: 'X2X' },
  { links: ['', 'l'], icon: 'slot', label: '' },
];

type Param = Item & { mark?: Mark; value?: string; desc?: string };
const params: Param[] = [
  { links: [''], open: true, icon: 'config', mark: 'alert', label: '0RMSM1135.4G' },
  { links: ['', 'l'], open: true, icon: 'card', mark: 'alert', label: 'Function model', value: 'default', desc: 'Module' },
  { links: ['', '', 't'], open: true, icon: 'card', label: 'General' },
  { links: ['', '', 'v', 'l'], icon: 'gem', mark: 'lock', label: 'Module supervised', value: 'off', desc: 'Service' },
  { links: ['', '', 't'], open: true, icon: 'card', mark: 'alert', label: 'DEV1 interface' },
  { links: ['', '', 'v', 't'], icon: 'gem', mark: 'alert', label: 'IP address', value: '10.0.0.1' },
  { links: ['', '', 'v', 'l'], icon: 'gem', label: 'Subnet mask', value: '255.255.255.0' },
  { links: ['', '', 't'], open: true, icon: 'card', label: 'UPLINK1 interface' },
  { links: ['', '', 'v', 'l'], icon: 'card', label: 'Mode', value: 'DHCP', selected: true },
  { links: ['', '', 't'], open: true, icon: 'card', mark: 'alert', label: 'UPLINK2 interface' },
  { links: ['', '', 'v', 'l'], open: true, icon: 'card', mark: 'alert', label: 'Integrated modem', value: 'on' },
  { links: ['', '', 'v', '', 't'], icon: 'gem', label: 'APN', desc: 'Access' },
  { links: ['', '', 'v', '', 'l'], icon: 'gem', label: 'SIM PIN Code' },
  { links: ['', '', 't'], open: true, icon: 'card', mark: 'alert', label: 'GateManager settings' },
  { links: ['', '', 'v', 't'], icon: 'gem', label: 'Remote Management', value: 'Enabled', desc: 'Controls' },
  { links: ['', '', 'v', 't'], icon: 'gem', label: 'Go To Appliance', value: 'Automatic, not LinkManager', desc: 'This option' },
  { links: ['', '', 'v', 't'], icon: 'gem', mark: 'alert', label: 'Appliance name', value: 'SUPPORT', desc: 'name of' },
  { links: ['', '', 'v', 't'], icon: 'gem', mark: 'alert', label: 'Domain token', value: 'BR.B&R China.Test', desc: 'Token for' },
  { links: ['', '', 'v', 'l'], icon: 'gem', mark: 'alert', label: 'GateManager address', value: 'gm02.br-automation.com', desc: 'IP address' },
  { links: ['', '', 'l'], open: true, icon: 'card', label: 'Proxy settings' },
  { links: ['', '', '', 'l'], icon: 'card', label: 'Proxy', value: 'off' },
];

const Tools = ({ items, w, size }: { items: string[]; w?: number; size?: number }) => (
  <>
    {items.map((n, i) => n === '|' ? <Divider key={i} /> : (
      <ToolButton key={i} type="button" $w={w} aria-label={n}><Icon name={n} size={size} /></ToolButton>
    ))}
  </>
);
const MoreArt = () => (
  <Svg width="8" height="8" viewBox="0 0 8 8" aria-hidden="true"><path d="M1 1h6" stroke="#000" strokeWidth="1.500" /><path d="M0 4h8L4 8z" /></Svg>
);

export default function App() {
  return (
    <Window>
      <GlobalStyle />
      <Defs />
      <TitleBar>
        <Icon name="app" />
        <span>C:\projects\test0622\test0622.apj/Config1 - Automation Studio V 4.8.2.72 # AS Single Computer License</span>
      </TitleBar>
      <MenuBar>
        {menus.map(([pre, key, rest]) => <button type="button" key={pre + key + rest}>{pre}<u>{key}</u>{rest}</button>)}
      </MenuBar>
      <ToolRow>
        <ToolGroup>
          <Grip $w={10} />
          <Tools items={fileTools} />
          <Overflow type="button" aria-label="More file tools"><MoreArt /></Overflow>
        </ToolGroup>
        <ToolGroup>
          <Grip $w={8} />
          <Tools items={buildTools} />
          <Overflow type="button" aria-label="More build tools"><MoreArt /></Overflow>
        </ToolGroup>
        <ToolGroup $grow>
          <Grip $w={8} />
          <Tools items={markTools} />
          <Combo>
            <ComboSelect aria-label="Search text" defaultValue="Axis1Obj"><option>Axis1Obj</option></ComboSelect>
            <ComboArrow><Svg width="8" height="4" viewBox="0 0 8 4" aria-hidden="true"><path d="M0 0h8L4 4z" /></Svg></ComboArrow>
          </Combo>
          <Tools items={findTools} />
        </ToolGroup>
      </ToolRow>
      <Main>
        <Side>
          <SideHeader>
            <h2>Physical View</h2>
            <HeaderButton type="button" aria-label="Panel menu"><Svg width="11" height="6" viewBox="0 0 11 6"><path d="M0 0h11L5.500 6z" fill="#fff" /></Svg></HeaderButton>
            <HeaderButton type="button" aria-label="Pin"><Svg width="10" height="11" viewBox="0 0 10 11"><path d="M3 1h4v5H3zM1 6.500h8M5 7v4M6.500 1v5" stroke="#fff" strokeWidth="1.300" fill="none" /></Svg></HeaderButton>
            <HeaderButton type="button" aria-label="Close"><Svg width="10" height="10" viewBox="0 0 10 10"><path d="M.5.5l9 9M9.500.5l-9 9" stroke="#fff" strokeWidth="2" /></Svg></HeaderButton>
          </SideHeader>
          <SideBody>
            <SideTools><SideStrip><Tools items={sideTools} w={23} size={16} /></SideStrip></SideTools>
            <SideTitle>Name</SideTitle>
            <ul aria-label="Hardware">
              {hardware.map((n, i) => (
                <TreeRow key={i} $selected={n.selected}>
                  <Node {...n} h={20} />
                  <TreeLabel $low>{n.label}</TreeLabel>
                  {n.selected && <Callout $x={76} $y={-6} $w={187} $h={33} />}
                </TreeRow>
              ))}
            </ul>
          </SideBody>
        </Side>
        <Splitter />
        <Editor>
          <Tabs>
            <Tab type="button" $rule><Icon name="logger" size={18} />SL1 [Logger]</Tab>
            <Tab type="button" $rule $min={237}><Icon name="tiles" size={18} />X20CP1585.IF2 [Configuration]</Tab>
            <Tab type="button" $min={237}><Icon name="tiles" size={18} />X20CP1585.IF3 [Configuration]</Tab>
            <Tab type="button" $active $min={270}>
              <Icon name="tiles" size={18} />0RMSM1135.4G [Configuration]
              <TabClose><Svg width="10" height="10" viewBox="0 0 10 10" aria-hidden="true"><path d="M.5.5l9 9M9.500.5l-9 9" stroke="#000" strokeWidth="2" /></Svg></TabClose>
            </Tab>
            <Tab type="button"><Icon name="watch" size={18} />0RMSM1135.4G</Tab>
          </Tabs>
          <EditorTools><Tools items={editorTools} /></EditorTools>
          <Frame>
            <Sheet>
              <Table>
                <colgroup><col style={{ width: 440 }} /><col style={{ width: 296 }} /><col style={{ width: 99 }} /><col /></colgroup>
                <thead><tr><th>Name</th><th>Value</th><th>Unit</th><th>Description</th></tr></thead>
                <tbody>
                  {params.map((p, i) => (
                    <Row key={i} $selected={p.selected}>
                      <td>
                        <NameCell>
                          <Node links={p.links} open={p.open} icon={p.icon} mark={p.mark} h={22} />
                          {p.selected ? <EditBox>{p.label}</EditBox> : <TreeLabel>{p.label}</TreeLabel>}
                        </NameCell>
                      </td>
                      <td>{p.value}</td>
                      <td />
                      <td>{p.desc}</td>
                    </Row>
                  ))}
                </tbody>
              </Table>
            </Sheet>
            <Callout $x={397} $y={129} $w={232} $h={64} />
            <Callout $x={397} $y={319} $w={334} $h={145} />
            <Pointer width="400" height="150" viewBox="301 289 400 150" aria-hidden="true">
              <path d="M307 292L677 421l2-3 12 13-19 2 2-5L307 293z" fill={red} />
            </Pointer>
          </Frame>
        </Editor>
      </Main>
    </Window>
  );
}
